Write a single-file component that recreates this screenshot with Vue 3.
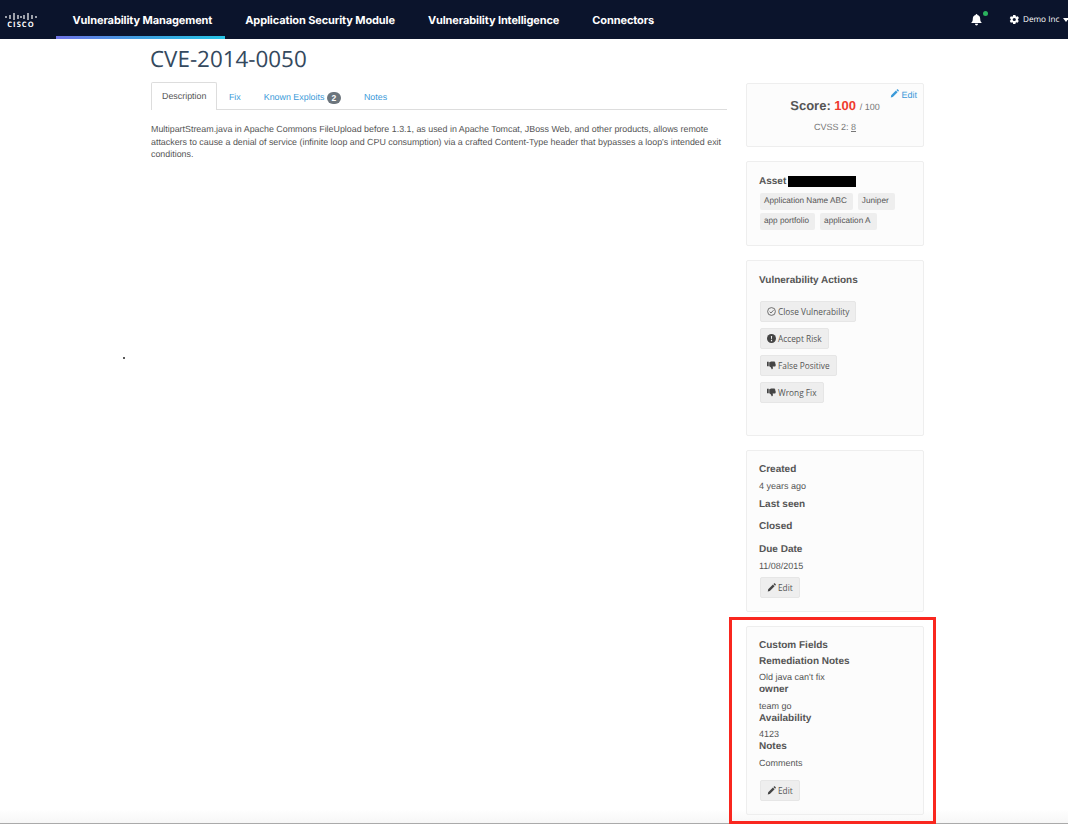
<script setup>
const navItems = [
  { label: 'Vulnerability Management', active: true },
  { label: 'Application Security Module' },
  { label: 'Vulnerability Intelligence' },
  { label: 'Connectors' }
]
const tags = ['Application Name ABC', 'Juniper', 'app portfolio', 'application A']
const actions = [
  { label: 'Close Vulnerability', icon: 'check' },
  { label: 'Accept Risk', icon: 'alert' },
  { label: 'False Positive', icon: 'thumb' },
  { label: 'Wrong Fix', icon: 'thumb' }
]
const pencil = 'M1 11.2 1.6 8.4 7.9 2.1 10.1 4.3 3.8 10.6ZM8.6 1.4 9.4.6C9.8.2 10.3.2 10.7.6L11.6 1.5C12 1.9 12 2.4 11.6 2.8L10.8 3.6Z'
</script>

<template>
  <div class="page">
    <header class="topbar">
      <div class="logo">
        <svg width="32" height="9" viewBox="0 0 32 9" class="logo-bars">
          <path d="M1 4v2M5 3v4M9 1v7M13 3v4M16 4v2M19 3v4M23 1v7M27 3v4M31 4v2" stroke="#fff" stroke-width="1.2" fill="none" />
        </svg>
        <span class="logo-text">CISCO</span>
      </div>
      <nav class="nav">
        <a v-for="item in navItems" :key="item.label" class="nav-item" :class="{ active: item.active }">{{ item.label }}</a>
      </nav>
      <div class="top-right">
        <span class="bell">
          <svg width="11" height="12" viewBox="0 0 11 12"><path d="M5.5 0C6 0 6.400.4 6.400 1C8.200 1.400 9.200 2.900 9.200 4.800C9.200 6.900 9.700 7.900 11 9H0C1.300 7.900 1.800 6.900 1.800 4.800C1.800 2.900 2.800 1.400 4.600 1C4.600.4 5 0 5.500 0ZM4 9.800H7C7 10.700 6.300 11.400 5.500 11.400S4 10.700 4 9.800Z" fill="#fff" /></svg>
          <i class="bell-dot"></i>
        </span>
        <span class="account">
          <svg class="gear" width="11" height="11" viewBox="0 0 24 24"><path fill="#fff" d="M19.400 13c.1-.3.1-.7.100-1s0-.7-.1-1l2.100-1.600c.2-.2.300-.4.100-.7l-2-3.400c-.1-.2-.4-.3-.6-.2l-2.500 1c-.5-.4-1.100-.7-1.700-1L14 2.400c0-.2-.3-.4-.5-.4h-4c-.2 0-.5.200-.5.400l-.4 2.700c-.6.200-1.200.6-1.700 1l-2.500-1c-.2-.1-.5 0-.6.200l-2 3.400c-.1.300-.1.500.1.700L4 11c-.1.300-.1.700-.1 1s0 .7.100 1l-2.100 1.600c-.2.200-.3.400-.1.700l2 3.400c.1.200.4.300.6.200l2.500-1c.5.400 1.100.7 1.700 1l.4 2.700c0 .2.300.4.500.4h4c.2 0 .5-.2.500-.4l.4-2.700c.6-.2 1.200-.6 1.700-1l2.500 1c.2.100.5 0 .6-.2l2-3.400c.1-.3.100-.5-.1-.7ZM11.500 15.500a3.500 3.500 0 1 1 0-7 3.500 3.500 0 0 1 0 7Z" /></svg>
          Demo Inc
          <i class="caret"></i>
        </span>
      </div>
    </header>

    <div class="content">
      <main class="main">
        <h1 class="title">CVE-2014-0050</h1>
        <div class="tabs">
          <a class="tab selected">Description</a>
          <a class="tab">Fix</a>
          <a class="tab">Known Exploits <span class="badge">2</span></a>
          <a class="tab">Notes</a>
        </div>
        <p class="description">MultipartStream.java in Apache Commons FileUpload before 1.3.1, as used in Apache Tomcat, JBoss Web, and other products, allows remote attackers to cause a denial of service (infinite loop and CPU consumption) via a crafted Content-Type header that bypasses a loop's intended exit conditions.</p>
      </main>

      <aside class="sidebar">
        <section class="card score-card">
          <a class="edit-link">
            <svg width="9" height="9" viewBox="0 0 12 12"><path :d="pencil" fill="#3b9ad9" /></svg>
            Edit
          </a>
          <div class="score">Score: <b>100</b> <small>/ 100</small></div>
          <div class="cvss">CVSS 2: <u>8</u></div>
        </section>

        <section class="card asset-card">
          <div class="asset-title"><strong>Asset</strong><span class="redacted"></span></div>
          <div class="tags">
            <span v-for="tag in tags" :key="tag" class="tag">{{ tag }}</span>
          </div>
        </section>

        <section class="card actions-card">
          <strong class="actions-title">Vulnerability Actions</strong>
          <div class="actions">
            <button v-for="action in actions" :key="action.label" class="btn" type="button">
              <svg v-if="action.icon === 'check'" width="9" height="9" viewBox="0 0 12 12"><circle cx="6" cy="6" r="5.200" fill="none" stroke="#555" stroke-width="1.100" /><path d="M3.500 6.200 5.300 8 8.700 4.300" fill="none" stroke="#555" stroke-width="1.100" /></svg>
              <svg v-else-if="action.icon === 'alert'" width="9" height="9" viewBox="0 0 12 12"><circle cx="6" cy="6" r="6" fill="#444" /><path d="M5.200 2.500H6.800L6.500 7H5.500ZM5.200 8H6.800V9.500H5.200Z" fill="#eee" /></svg>
              <svg v-else width="9" height="9" viewBox="0 0 12 12"><path d="M0 1H2.300V7H0ZM3 1.500C4.500 1.500 5 .6 6.500.6H9.500C10.300.6 10.600 1.200 10.500 1.800C11.300 2.300 11.300 3 11 3.500C11.800 4 11.800 4.900 11.300 5.400C12 6.200 11.500 7.300 10.500 7.300H7.500C7.900 8.300 8 9 7.800 10C7.600 11.200 6.200 11.400 6 10.500C5.700 8.800 4.500 7.500 3 7Z" fill="#444" /></svg>
              {{ action.label }}
            </button>
          </div>
        </section>

        <section class="card dates-card">
          <strong class="field-name">Created</strong>
          <span class="field-value">4 years ago</span>
          <strong class="field-name">Last seen</strong>
          <strong class="field-name">Closed</strong>
          <strong class="field-name">Due Date</strong>
          <span class="field-value">11/08/2015</span>
          <button class="btn edit-btn" type="button">
            <svg width="9" height="9" viewBox="0 0 12 12"><path :d="pencil" fill="#444" /></svg>
            Edit
          </button>
        </section>

        <section class="card custom-card">
          <strong class="custom-name first">Custom Fields</strong>
          <strong class="custom-name">Remediation Notes</strong>
          <span class="custom-value">Old java can't fix</span>
          <strong class="custom-name tight">owner</strong>
          <span class="custom-value">team go</span>
          <strong class="custom-name tight">Availability</strong>
          <span class="custom-value">4123</span>
          <strong class="custom-name tight">Notes</strong>
          <span class="custom-value">Comments</span>
          <button class="btn edit-btn custom-edit" type="button">
            <svg width="9" height="9" viewBox="0 0 12 12"><path :d="pencil" fill="#444" /></svg>
            Edit
          </button>
        </section>
      </aside>
    </div>

    <i class="speck"></i>
    <div class="bottom-fade"></div>
    <div class="highlight"></div>
  </div>
</template>

<style scoped>
.page {
  position: relative;
  height: 824px;
  overflow: hidden;
  background: #fff;
  color: #555;
  font-family: "Liberation Sans", Arial, sans-serif;
  font-size: 9px;
  text-rendering: geometricPrecision;
}

.topbar {
  display: flex;
  align-items: center;
  height: 39px;
  background: #0b142c;
  color: #fff;
}

.logo {
  display: flex;
  flex-direction: column;
  align-items: center;
  width: 56px;
  padding-right: 14px;
  padding-top: 2px;
  box-sizing: border-box;
}

.logo-text {
  font-family: "Open Sans", sans-serif;
  font-size: 7.500px;
  font-weight: 700;
  letter-spacing: 1.100px;
  line-height: 9px;
}

.nav {
  display: flex;
  align-self: stretch;
}

.nav-item {
  display: flex;
  align-items: center;
  padding: 0 16.500px;
  font-family: Inter, sans-serif;
  font-size: 11px;
  font-weight: 700;
  letter-spacing: -0.110px;
  position: relative;
}

.nav-item.active::after {
  content: "";
  position: absolute;
  left: 0;
  right: 3.500px;
  bottom: 0;
  height: 3px;
  background: linear-gradient(90deg, #6f73e6 0%, #3f9fe0 50%, #27c4e6 100%);
}

.top-right {
  display: flex;
  align-items: center;
  margin-left: auto;
  gap: 27px;
  white-space: nowrap;
}

.bell {
  position: relative;
  display: flex;
}

.bell-dot {
  position: absolute;
  top: -3px;
  right: -6px;
  width: 5px;
  height: 5px;
  border-radius: 50%;
  background: #2bb35e;
}

.account {
  display: flex;
  align-items: center;
  gap: 3px;
  width: 59px;
  font-family: "Open Sans", sans-serif;
  font-size: 8.200px;
}

.gear {
  flex: none;
}

.caret {
  flex: none;
  margin-left: 1px;
  border-left: 3.500px solid transparent;
  border-right: 3.500px solid transparent;
  border-top: 4px solid #fff;
}

.content {
  display: flex;
  align-items: flex-start;
  padding-left: 151px;
  gap: 19px;
}

.main {
  width: 576px;
}

.title {
  margin: 0 0 0 -1px;
  padding-top: 5px;
  font-family: "Open Sans", sans-serif;
  font-size: 22.400px;
  font-weight: 400;
  line-height: 29px;
  color: #34495e;
}

.tabs {
  display: flex;
  align-items: flex-end;
  height: 27px;
  margin-top: 9px;
  border-bottom: 1px solid #ddd;
  font-size: 8.900px;
}

.tab {
  height: 26px;
  padding: 0 10.500px;
  margin-bottom: -1px;
  line-height: 26px;
  color: #3b9ad9;
  border: 1px solid transparent;
  border-bottom: 0;
  white-space: nowrap;
}

.tab.selected {
  height: 27px;
  padding: 0 10px;
  color: #555;
  background: #fff;
  border-color: #ddd;
  border-radius: 2px 2px 0 0;
}

.badge {
  display: inline-block;
  width: 14px;
  height: 12px;
  border-radius: 7px;
  background: #6c757d;
  color: #fff;
  font-size: 8.500px;
  font-weight: 700;
  line-height: 12px;
  text-align: center;
  vertical-align: -1px;
}

.description {
  margin: 13px 0 0;
  font-size: 8.900px;
  line-height: 12.500px;
}

.sidebar {
  display: flex;
  flex-direction: column;
  gap: 14px;
  width: 178px;
  margin-top: 44px;
}

.card {
  display: flex;
  flex-direction: column;
  align-items: flex-start;
  position: relative;
  box-sizing: border-box;
  padding: 0 12px;
  background: #fcfcfc;
  border: 1px solid #eee;
  border-radius: 2px;
}

.score-card {
  align-items: center;
  height: 64px;
}

.edit-link {
  position: absolute;
  top: 5px;
  right: 6px;
  color: #3b9ad9;
  font-size: 9px;
}

.score {
  margin-top: 14px;
  font-size: 13px;
  font-weight: 700;
  color: #555;
}

.score b {
  color: #ef3a2d;
}

.score small {
  font-size: 9px;
  font-weight: 400;
  color: #777;
}

.cvss {
  margin-top: 9px;
  font-size: 9px;
  color: #777;
}

.asset-card {
  height: 85px;
}

.asset-title {
  display: flex;
  align-items: center;
  gap: 1.500px;
  margin-top: 14px;
  font-size: 10px;
}

.redacted {
  width: 68px;
  height: 11px;
  background: #000;
}

.tags {
  display: flex;
  flex-wrap: wrap;
  gap: 3px 5px;
  margin-top: 6px;
  padding-left: 1px;
}

.tag {
  height: 17px;
  padding: 0 6px 0 4px;
  background: #eee;
  border-radius: 2px;
  font-size: 8.200px;
  line-height: 16px;
  white-space: nowrap;
}

.actions-card {
  height: 176px;
}

.actions-title {
  margin-top: 14px;
  font-size: 10px;
}

.actions {
  display: flex;
  flex-direction: column;
  align-items: flex-start;
  gap: 6px;
  margin-top: 15px;
  padding-left: 1px;
}

.btn {
  display: flex;
  align-items: center;
  gap: 2px;
  height: 21px;
  padding: 0 6px;
  background: #eee;
  border: 1px solid #e6e6e6;
  border-radius: 2px;
  color: #555;
  font-family: "Open Sans", sans-serif;
  font-size: 8.300px;
}

.dates-card {
  height: 162px;
}

.field-name {
  margin-top: 11.500px;
  font-size: 10px;
  line-height: 13px;
}

.field-name + .field-name {
  margin-top: 9.500px;
}

.field-value {
  margin-top: 5px;
  font-size: 9px;
  line-height: 11px;
}

.field-value + .field-name {
  margin-top: 6px;
}

.edit-btn {
  margin: 5px 0 0 1px;
}

.custom-card {
  height: 189px;
}

.custom-name {
  margin-top: 2.500px;
  font-size: 10px;
  line-height: 13px;
}

.custom-name.first {
  margin-top: 12px;
}

.custom-name.tight {
  margin-top: 0;
}

.custom-value {
  margin-top: 4.500px;
  font-size: 9px;
  line-height: 11px;
}

.custom-name.tight + .custom-value {
  margin-top: 4.500px;
}

.custom-edit {
  margin-top: 11px;
}

.speck {
  position: absolute;
  left: 123px;
  top: 357px;
  width: 2px;
  height: 2px;
  border-radius: 50%;
  background: #222;
}

.highlight {
  position: absolute;
  left: 729px;
  top: 617px;
  width: 207px;
  height: 207px;
  box-sizing: border-box;
  border: 3px solid #f9271f;
}

.bottom-fade {
  position: absolute;
  left: 0;
  right: 0;
  bottom: 0;
  height: 14px;
  background: linear-gradient(rgba(240, 240, 240, 0), rgba(238, 238, 238, .5));
  border-bottom: 1px solid #aaa;
  pointer-events: none;
}
</style>
